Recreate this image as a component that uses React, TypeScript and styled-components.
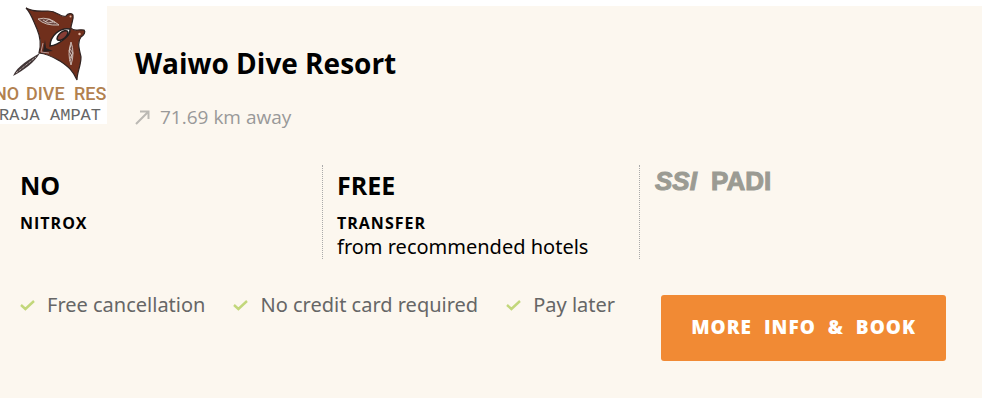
import React from "react";
import styled, { createGlobalStyle } from "styled-components";

const GlobalStyle = createGlobalStyle`
  * { box-sizing: border-box; }
  body {
    margin: 0;
    background: #fff;
    color: #000;
    font-family: "Open Sans", "Noto Sans", sans-serif;
    font-size: 20px;
    line-height: 28px;
  }
  h2, p, ul { margin: 0; padding: 0; }
`;

const Card = styled.article`
  margin-top: 6px;
  padding-bottom: 37px;
  background: #fcf7ef;
`;

const Header = styled.header`
  display: flex;
  gap: 28px;
`;

const ResortLogo = styled.svg`
  flex: none;
  display: block;
  background: #fff;
`;

const Heading = styled.div`
  padding-top: 37px;
`;

const Title = styled.h2`
  font-size: 28px;
  font-weight: 700;
  line-height: 40px;
`;

const Distance = styled.p`
  display: flex;
  align-items: center;
  gap: 10px;
  margin-top: 20px;
  color: #999;
  font-size: 19px;
`;

const Facts = styled.div`
  display: grid;
  grid-template-columns: repeat(3, 1fr);
  margin-top: 34px;
  padding: 0 25px 0 6px;
`;

const Fact = styled.section`
  min-height: 94px;
  padding: 0 14px;
  border-right: 1px dotted #aaa;

  &:last-child { border-right: 0; }
`;

const FactValue = styled.p`
  padding-top: 2px;
  font-size: 25px;
  font-weight: 700;
  line-height: 36px;
`;

const FactLabel = styled.p`
  margin-top: 8px;
  font-size: 16px;
  font-weight: 700;
  line-height: 24px;
  letter-spacing: 1px;
`;

const FactNote = styled.p`
  font-family: "Noto Sans", "Open Sans", sans-serif;
  line-height: 24px;
`;

const Agencies = styled.svg`
  display: block;
`;

const Footer = styled.footer`
  display: flex;
  justify-content: space-between;
  align-items: flex-start;
  margin-top: 36px;
  padding: 0 36px 0 20px;
`;

const Perks = styled.ul`
  display: flex;
  gap: 28px;
  color: #666;
  font-family: "Noto Sans", "Open Sans", sans-serif;
  list-style: none;
`;

const Perk = styled.li`
  display: flex;
  align-items: center;
  gap: 12px;
  line-height: 20px;
  white-space: nowrap;
`;

const BookButton = styled.button`
  padding: 19px 30px 21px;
  border: 0;
  border-radius: 3px;
  background: #f18a34;
  color: #fff;
  font: 800 19px/26px "Open Sans", "Noto Sans", sans-serif;
  letter-spacing: 1px;
  word-spacing: 6px;
  white-space: nowrap;
  cursor: pointer;
`;

const perks = ["Free cancellation", "No credit card required", "Pay later"];

function Check() {
  return (
    <svg width="15" height="12" viewBox="0 0 15 12" aria-hidden="true">
      <path d="M1 6 L5.4 10 L14 2" fill="none" stroke="#c2d77b" strokeWidth="2.4" />
    </svg>
  );
}

function MantaLogo() {
  return (
    <ResortLogo width="107" height="118" viewBox="0 6 107 118" role="img" aria-label="Waiwo Dive Resort, Raja Ampat">
      <path
        d="M26 8 C33 12 39 11 48 11 C58 11 60 18 66 16 C68 13 72 13 73 15 C74 20 71 23 71 28 C74 32 77 29 84 30 C86 32 84 35 81 37 C77 42 79 48 81 57 C81 66 77 72 77 80 C73 71 69 67 60 61 C53 57 48 54 39 53 C42 43 40 36 37 29 C33 20 31 13 26 8 Z"
        fill="#702f1c" stroke="#302321" strokeWidth="1.2"
      />
      <path d="M40 53 C30 59 17 66 13 76 C24 70 35 62 40 53 Z" fill="#403536" />
      <path d="M16 73 L36 57" stroke="#b5a5a2" strokeWidth="1" strokeDasharray="3 1" />
      <path d="M38 19 Q49 16 59 25 Q45 26 38 19 Z" fill="#6b4640" stroke="#cbb8af" strokeWidth="1" />
      <path d="M43 20 L48 23 L53 22 M45 22 L49 19 L55 23" fill="none" stroke="#e0d1cb" strokeWidth=".8" />
      <path d="M50 46 C50 36 60 27 70 29 C71 36 58 45 50 46 Z" fill="#fff" stroke="#262020" strokeWidth="1.5" />
      <ellipse cx="62.5" cy="35.5" rx="6.5" ry="3.2" transform="rotate(-40 62.5 35.5)" fill="#873d35" stroke="#252020" strokeWidth="1.5" />
      <path d="M71 42 Q67 54 71 65 Q75 53 71 42 Z" fill="#6b4640" stroke="#c9b4ad" strokeWidth="1" />
      <path d="M71 45 L69 51 L72 56 L70 61 M70 49 L73 53 L70 58" fill="none" stroke="#ded0c9" strokeWidth=".8" />
      <path d="M45 40 L43 52 L53 51 L46 48 Z" fill="#2a2020" />
      <path d="M43 43 L41 52 L49 53" fill="none" stroke="#b89895" strokeWidth="1" />
      <circle cx="70.5" cy="16.5" r="1" fill="#e4b8a3" />
      <circle cx="79.5" cy="34" r="1.2" fill="#e4b8a3" />
      <g fill="#b2814f" fontFamily="Roboto, 'Open Sans', sans-serif" fontSize="18" fontWeight="500">
        <text x="-6" y="100">NO</text>
        <text x="26" y="100">DIVE</text>
        <text x="74" y="100">RES</text>
      </g>
      <text x="-1" y="120" fill="#666" fontFamily="'Liberation Mono', monospace" fontSize="17">RAJA AMPAT</text>
    </ResortLogo>
  );
}

export default function App() {
  return (
    <>
      <GlobalStyle />
      <Card>
        <Header>
          <MantaLogo />
          <Heading>
            <Title>Waiwo Dive Resort</Title>
            <Distance>
              <svg width="15" height="15" viewBox="0 0 15 15" aria-hidden="true">
                <path d="M1 14 L12.5 2.5 M5 1.5 H13.5 V9" fill="none" stroke="#bbb9b4" strokeWidth="2" />
              </svg>
              71.69 km away
            </Distance>
          </Heading>
        </Header>
        <Facts>
          <Fact>
            <FactValue>NO</FactValue>
            <FactLabel>NITROX</FactLabel>
          </Fact>
          <Fact>
            <FactValue>FREE</FactValue>
            <FactLabel>TRANSFER</FactLabel>
            <FactNote>from recommended hotels</FactNote>
          </Fact>
          <Fact>
            <Agencies width="124" height="34" viewBox="0 0 124 34" role="img" aria-label="SSI and PADI">
              <g fill="#9b9b93" stroke="#9b9b93" fontFamily="'Liberation Sans', Arial, sans-serif" fontSize="26" fontWeight="700">
                <text x="1" y="25" fontStyle="italic">SSI</text>
                <text x="57" y="25">PADI</text>
              </g>
            </Agencies>
          </Fact>
        </Facts>
        <Footer>
          <Perks>
            {perks.map((perk) => (
              <Perk key={perk}>
                <Check />
                {perk}
              </Perk>
            ))}
          </Perks>
          <BookButton type="button">MORE INFO &amp; BOOK</BookButton>
        </Footer>
      </Card>
    </>
  );
}
